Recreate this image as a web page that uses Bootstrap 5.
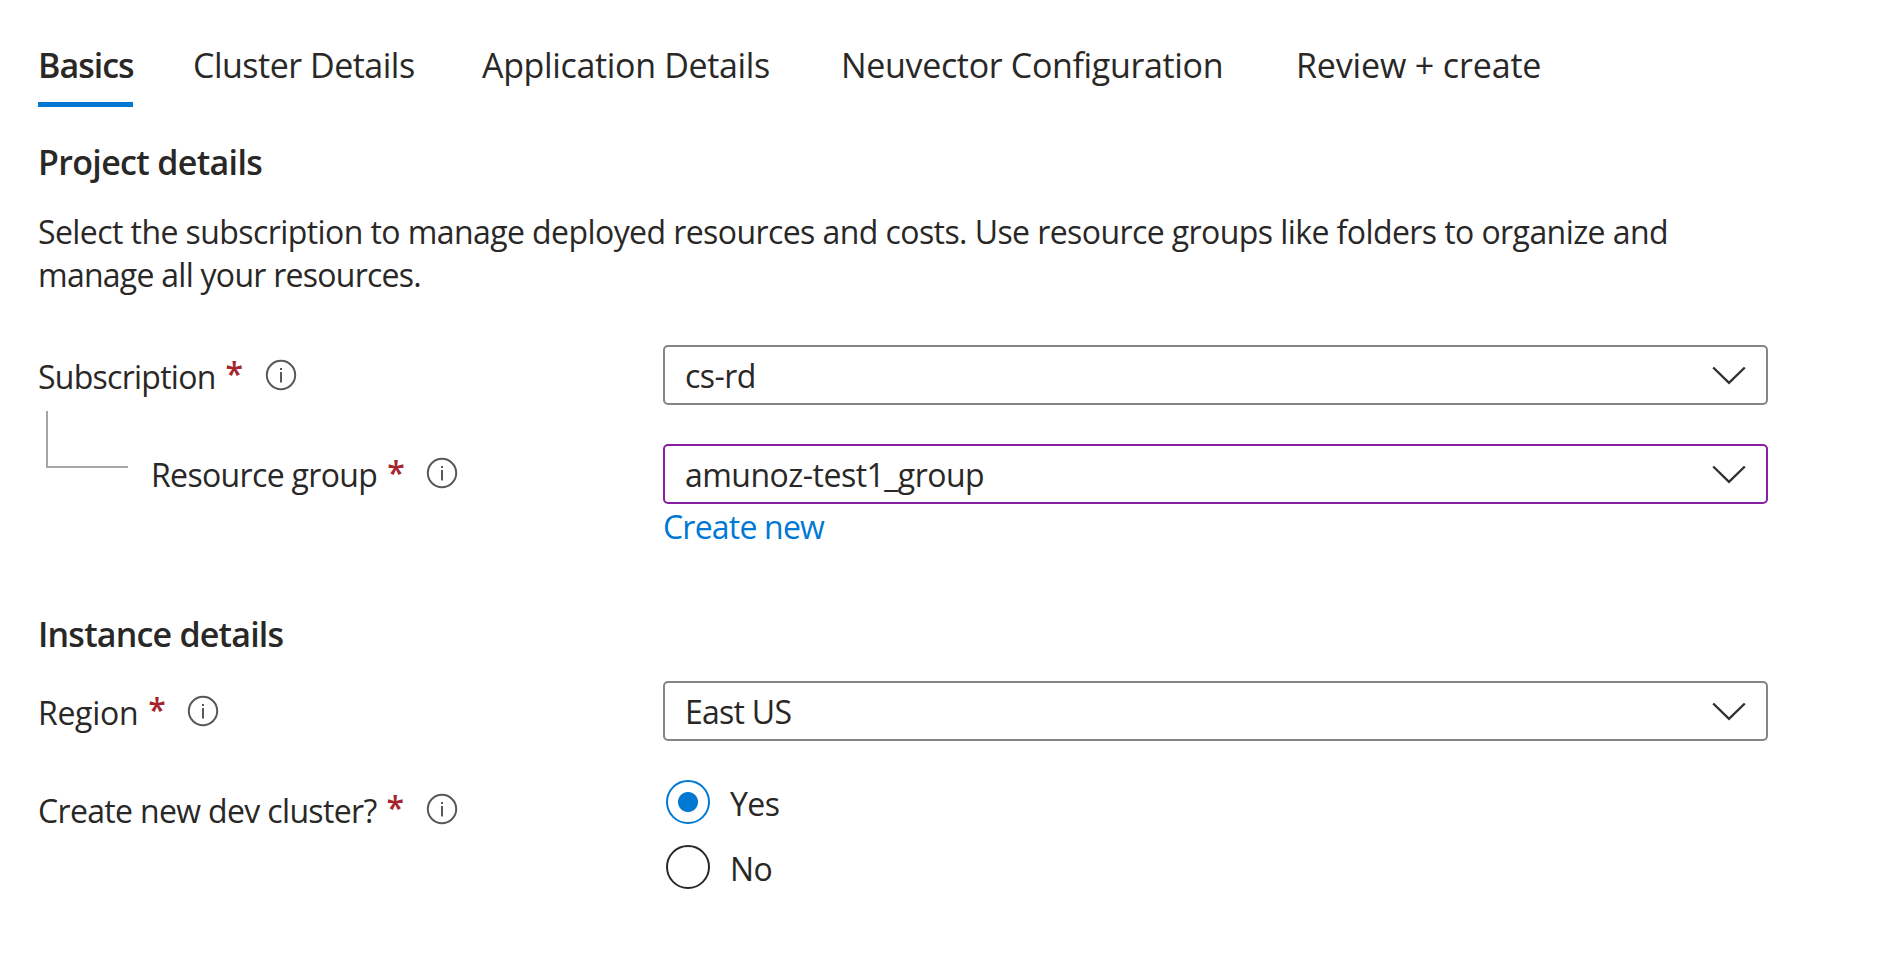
<!DOCTYPE html>
<html lang="en">
<head>
<meta charset="utf-8">
<meta name="viewport" content="width=device-width, initial-scale=1">
<title>Basics</title>
<link href="https://cdn.jsdelivr.net/npm/bootstrap@5.3.0/dist/css/bootstrap.min.css" rel="stylesheet">
<style>
body{font-family:"Open Sans","Noto Sans",sans-serif;font-size:32px;line-height:43px;letter-spacing:-.55px;color:#292827;background:#fff;overflow:hidden}
.page{padding:39px 136px 0 38px;white-space:nowrap}
.wizard-tabs{display:grid;grid-template-columns:155px 289px 359px 455px auto;height:68px;font-size:34px;line-height:48px;letter-spacing:-.34px}
.wizard-tabs .nav-link{justify-self:start;height:68px;padding:2px 0 0;color:inherit;transition:none}
.wizard-tabs .nav-link.active{width:95px;border-bottom:5px solid #0078d4;font-weight:600;letter-spacing:-1px}
.section-title{margin:0;font-size:34px;line-height:46px;font-weight:600;letter-spacing:-.66px}
.first-title{margin-top:32px}
.intro{margin:25px 0 49px;letter-spacing:-.58px}
.tight{letter-spacing:-.74px}
.snug{letter-spacing:-.15px}
.field-row{height:60px}
.field-label{width:625px;height:60px;padding-top:2px;letter-spacing:-.66px}
.nested .field-label{padding-left:113px;padding-top:1px;position:relative}
.nested .field-label::before{content:"";position:absolute;left:8px;top:-33px;width:82px;height:57px;border:solid #a6a6a6;border-width:0 0 2px 2px}
.req{width:17px;margin-left:10px;margin-bottom:5px;color:#a4262c;font-weight:600}
.info{width:32px;height:32px;margin-left:22px;margin-bottom:3px}
.picker{width:1105px;height:60px;border:2px solid #858585;border-radius:5px;padding:0 20px;background:#fff}
.picker svg{margin-top:2px}
.picker.touched{border-color:#881fa3;letter-spacing:-.52px}
.create-link{margin:1px 0 0 625px;color:#0078d4;text-decoration:none;letter-spacing:-.8px}
.choice{gap:20px;height:44px;margin-left:3px}
.choice span{padding-top:2px}
.choice .form-check-input{width:44px;height:44px;margin:0;border:2px solid #292827;background:#fff;flex:none}
.choice .form-check-input:checked{border-color:#0078d4;background:radial-gradient(circle,#0078d4 9.5px,#fff 10.5px)}
</style>
</head>
<body>
<svg class="d-none">
  <symbol id="info" viewBox="0 0 32 32"><circle cx="16" cy="16" r="14.2" fill="none" stroke="#595856" stroke-width="2"/><path d="M16 13v10.5M16 9v2" stroke="#595856" stroke-width="2" fill="none"/></symbol>
  <symbol id="chevron" viewBox="0 0 34 20"><path d="M1.2 1.5 17 16.8 32.8 1.5" fill="none" stroke="#323130" stroke-width="2.4"/></symbol>
</svg>
<main class="page">
  <nav class="nav wizard-tabs">
    <a class="nav-link active" href="#">Basics</a>
    <a class="nav-link" href="#" style="letter-spacing:-.5px">Cluster Details</a>
    <a class="nav-link" href="#">Application Details</a>
    <a class="nav-link" href="#">Neuvector Configuration</a>
    <a class="nav-link snug" href="#">Review + create</a>
  </nav>

  <h2 class="section-title first-title">Project details</h2>
  <p class="intro">Select the subscription to manage deployed resources and costs. Use resource groups like folders to organize and<br><span class="tight">manage all your resources.</span></p>

  <div class="field-row d-flex">
    <div class="field-label d-flex align-items-center"><span class="tight">Subscription</span><span class="req">*</span><svg class="info"><use href="#info"/></svg></div>
    <div class="picker d-flex align-items-center justify-content-between"><span>cs-rd</span><svg width="34" height="20"><use href="#chevron"/></svg></div>
  </div>
  <div class="field-row nested d-flex" style="margin-top:39px">
    <div class="field-label d-flex align-items-center"><span>Resource group</span><span class="req">*</span><svg class="info"><use href="#info"/></svg></div>
    <div class="picker touched d-flex align-items-center justify-content-between"><span>amunoz-test1_group</span><svg width="34" height="20"><use href="#chevron"/></svg></div>
  </div>
  <a class="create-link d-block" href="#">Create new</a>

  <h2 class="section-title" style="margin-top:63px;letter-spacing:-.8px">Instance details</h2>
  <div class="field-row d-flex" style="margin-top:24px">
    <div class="field-label d-flex align-items-center"><span style="letter-spacing:-.3px">Region</span><span class="req">*</span><svg class="info"><use href="#info"/></svg></div>
    <div class="picker d-flex align-items-center justify-content-between"><span class="tight">East US</span><svg width="34" height="20"><use href="#chevron"/></svg></div>
  </div>
  <div class="d-flex" style="margin-top:38px">
    <div class="field-label d-flex align-items-center"><span>Create new dev cluster?</span><span class="req">*</span><svg class="info"><use href="#info"/></svg></div>
    <div class="d-flex flex-column" style="gap:21px;padding-top:1px">
      <label class="choice d-flex align-items-center"><input class="form-check-input" type="radio" name="dev" checked><span>Yes</span></label>
      <label class="choice d-flex align-items-center"><input class="form-check-input" type="radio" name="dev"><span>No</span></label>
    </div>
  </div>
</main>
<script src="https://cdn.jsdelivr.net/npm/bootstrap@5.3.0/dist/js/bootstrap.bundle.min.js"></script>
</body>
</html>
